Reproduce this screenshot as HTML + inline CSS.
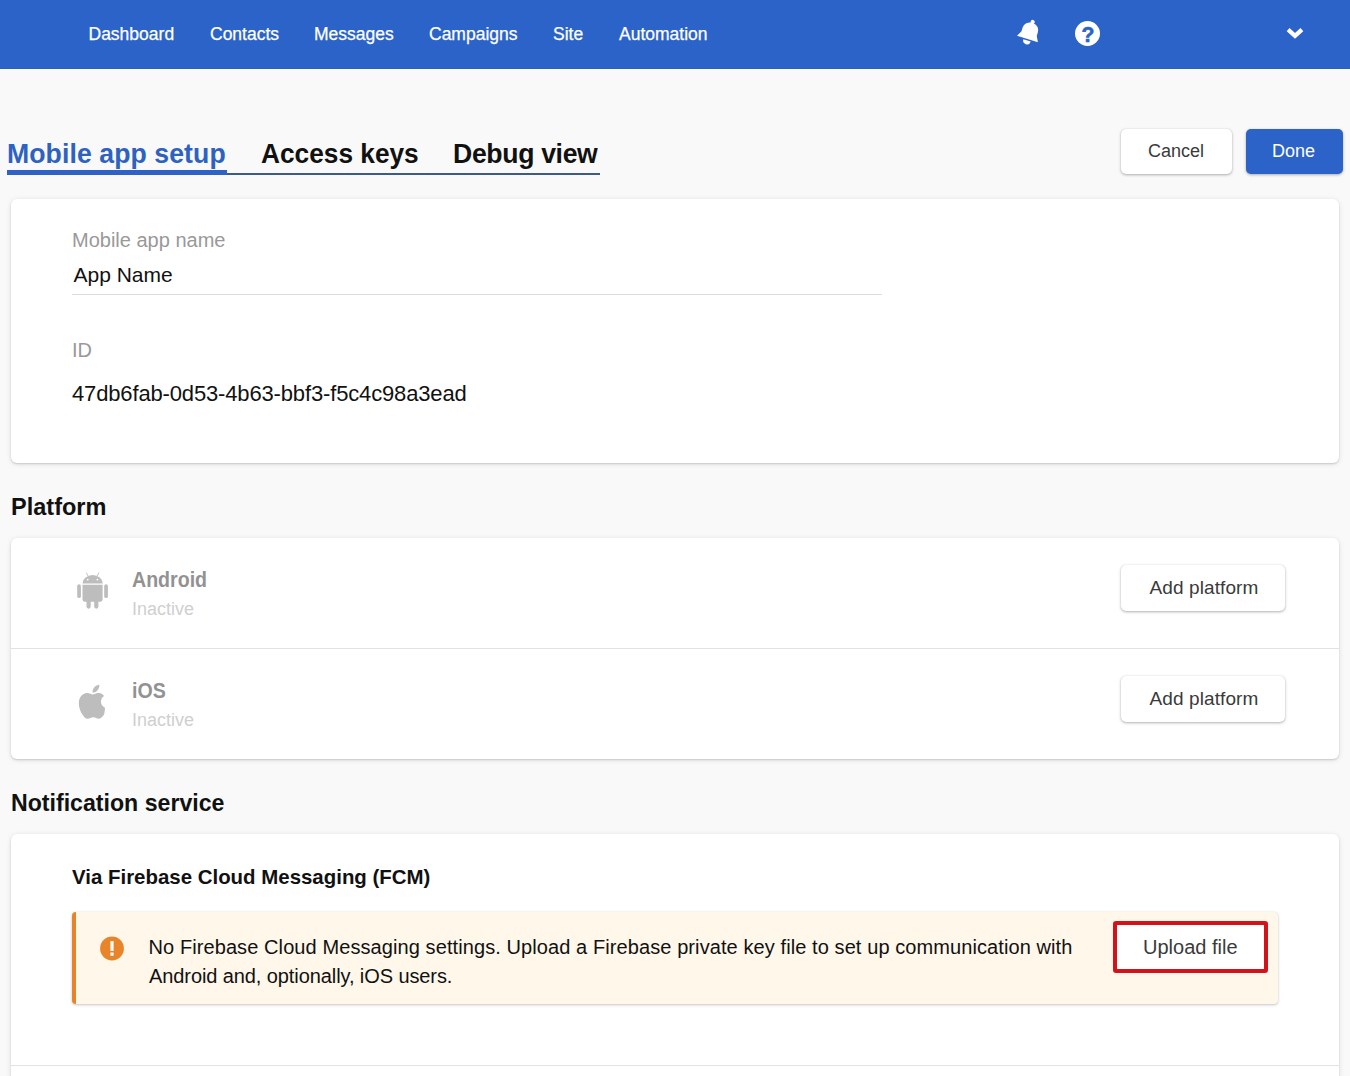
<!DOCTYPE html>
<html>
<head>
<meta charset="utf-8">
<style>
html, body { margin:0; padding:0; }
body { width:1350px; height:1076px; overflow:hidden; position:relative; background:#f9f9f9; font-family:"Liberation Sans", sans-serif; }
.a { position:absolute; white-space:nowrap; line-height:1; transform-origin:0 0; }
#nav { position:absolute; left:0; top:0; width:1350px; height:68px; background:#2b63c9; border-bottom:1px solid #3361a8; }
#navedge { position:absolute; left:0; top:69px; width:1350px; height:1px; background:#f0fcfd; }
.nv { position:absolute; top:25.5px; font-size:17.5px; color:#fff; -webkit-text-stroke:0.25px #fff; line-height:1; white-space:nowrap; }
.tab { font-size:28px; font-weight:700; color:#111; }
.card { position:absolute; left:11px; width:1328px; background:#fff; border-radius:6px; box-shadow:0 1px 2px rgba(0,0,0,0.16), 0 1px 6px rgba(0,0,0,0.09); }
.btn { position:absolute; background:#fff; border-radius:5px; box-shadow:0 1px 3px rgba(0,0,0,0.3), 0 0 1px rgba(0,0,0,0.15); }
.btxt { font-size:18px; color:#3a3a3a; }
.lbl { font-size:20px; color:#999; }
.val { color:#111; }
.sect { font-size:24px; font-weight:700; color:#111; }
.pname { font-size:22px; font-weight:700; color:#929292; }
.inact { font-size:18px; color:#cfcfcf; }
.div { position:absolute; height:1px; background:#e2e2e2; }
</style>
</head>
<body>
<div id="nav">
  <span class="nv" style="left:88.5px">Dashboard</span>
  <span class="nv" style="left:210px">Contacts</span>
  <span class="nv" style="left:314px">Messages</span>
  <span class="nv" style="left:429px">Campaigns</span>
  <span class="nv" style="left:553px">Site</span>
  <span class="nv" style="left:619px">Automation</span>
</div>

<div id="navedge"></div>
<!-- tabs -->
<div class="a" style="left:7px;top:173px;width:593px;height:2px;background:#3d5c85"></div>
<div class="a" style="left:7px;top:170px;width:220px;height:5px;background:#2e62c4"></div>
<span class="a tab" style="left:7px;top:140px;color:#2e62c0;letter-spacing:0.1px;transform:scaleX(0.95)">Mobile app setup</span>
<span class="a tab" style="left:261px;top:140px;transform:scaleX(0.938)">Access keys</span>
<span class="a tab" style="left:453px;top:140px;letter-spacing:-0.35px;transform:scaleX(0.95)">Debug view</span>

<!-- buttons -->
<div class="btn" style="left:1121px;top:129px;width:111px;height:45px"></div>
<span class="a btxt" style="left:1148px;top:142px">Cancel</span>
<div class="btn" style="left:1246px;top:129px;width:97px;height:45px;background:#2b63c9"></div>
<span class="a btxt" style="left:1272px;top:142px;color:#fff">Done</span>

<!-- card 1 -->
<div class="card" style="top:199px;height:264px"></div>
<span class="a lbl" style="left:72px;top:230px">Mobile app name</span>
<span class="a val" style="left:73.5px;top:263.5px;font-size:21px">App Name</span>
<div class="div" style="left:72px;top:294px;width:810px;background:#dcdcdc"></div>
<span class="a lbl" style="left:72px;top:340px">ID</span>
<span class="a val" style="left:72px;top:383px;font-size:22px;letter-spacing:-0.15px">47db6fab-0d53-4b63-bbf3-f5c4c98a3ead</span>

<!-- platform -->
<span class="a sect" style="left:11px;top:495px;transform:scaleX(0.98)">Platform</span>
<div class="card" style="top:538px;height:221px"></div>
<div class="div" style="left:11px;top:648px;width:1328px"></div>
<span class="a pname" style="left:132px;top:569px;transform:scaleX(0.89)">Android</span>
<span class="a inact" style="left:132px;top:600px">Inactive</span>
<span class="a pname" style="left:132px;top:680px;transform:scaleX(0.89)">iOS</span>
<span class="a inact" style="left:132px;top:711px">Inactive</span>
<div class="btn" style="left:1121px;top:565px;width:164px;height:46px"></div>
<span class="a btxt" style="left:1149.5px;top:578px;font-size:19px;letter-spacing:0.1px">Add platform</span>
<div class="btn" style="left:1121px;top:676px;width:164px;height:46px"></div>
<span class="a btxt" style="left:1149.5px;top:689px;font-size:19px;letter-spacing:0.1px">Add platform</span>

<!-- notification -->
<span class="a sect" style="left:11px;top:791px;transform:scaleX(0.964)">Notification service</span>
<div class="card" style="top:834px;height:300px"></div>
<span class="a" style="left:72px;top:866px;font-size:21px;font-weight:700;color:#111;transform:scaleX(0.973)">Via Firebase Cloud Messaging (FCM)</span>
<div class="a" style="left:72px;top:912px;width:1206px;height:92px;background:#fef7ea;border-radius:4px;box-shadow:0 1px 3px rgba(0,0,0,0.22), 0 0 1px rgba(0,0,0,0.12)"></div>
<div class="a" style="left:72px;top:912px;width:4px;height:92px;background:#e8832a;border-radius:4px 0 0 4px"></div>
<span class="a val" style="left:148.5px;top:937px;font-size:20px;letter-spacing:0.09px">No Firebase Cloud Messaging settings. Upload a Firebase private key file to set up communication with</span>
<span class="a val" style="left:149px;top:966px;font-size:20px;letter-spacing:-0.09px">Android and, optionally, iOS users.</span>
<div class="a" style="left:1113px;top:921px;width:147px;height:44px;border:4px solid #d3121a;border-radius:3px;background:#fff"></div>
<span class="a btxt" style="left:1143px;top:937px;font-size:20px">Upload file</span>
<div class="div" style="left:11px;top:1065px;width:1328px"></div>

<!-- nav icons -->
<svg class="a" style="left:1010px;top:14.5px" width="38" height="38" viewBox="0 0 38 38">
  <g transform="rotate(17 19 19) translate(19 19) scale(1.05) translate(-19 -19)" fill="#fff">
    <circle cx="19" cy="7" r="2"/>
    <path d="M19 8 C14 8 11.4 11.2 11.4 15.2 L11.4 18.6 L8.6 24 L29.4 24 L26.6 18.6 L26.6 15.2 C26.6 11.2 24 8 19 8 Z"/>
    <path d="M15.3 25.4 A3.7 3.7 0 0 0 22.7 25.4 Z"/>
  </g>
</svg>
<svg class="a" style="left:1075px;top:21px" width="25" height="25" viewBox="0 0 25 25">
  <circle cx="12.5" cy="12.5" r="12.5" fill="#fff"/>
</svg>
<span class="a" style="left:1080.6px;top:22.7px;font-size:22.8px;font-weight:700;color:#2b63c9;-webkit-text-stroke:0.6px #2b63c9;transform:scaleX(0.93);transform-origin:6px 0">?</span>
<svg class="a" style="left:1284px;top:24px" width="22" height="18" viewBox="0 0 22 18">
  <path d="M4.1 5.6 L11 11.9 L17.9 5.6" fill="none" stroke="#fff" stroke-width="4.2"/>
</svg>

<!-- android -->
<svg class="a" style="left:70px;top:565px" width="45" height="50" viewBox="70 565 45 50">
  <g fill="#bdbdbd">
    <path d="M82.5 583.6 A10.15 8.6 0 0 1 102.8 583.6 Z"/>
    <line x1="86.3" y1="572.6" x2="88" y2="576" stroke="#bdbdbd" stroke-width="0.9"/>
    <line x1="98.9" y1="572.6" x2="97.2" y2="576" stroke="#bdbdbd" stroke-width="0.9"/>
    <path d="M82.5 584.8 H102.6 V599.6 A2.1 2.1 0 0 1 100.5 601.7 H84.6 A2.1 2.1 0 0 1 82.5 599.6 Z"/>
    <rect x="77.2" y="584.3" width="3.7" height="13.7" rx="1.85"/>
    <rect x="104.2" y="584.3" width="3.7" height="13.7" rx="1.85"/>
    <rect x="86.5" y="596" width="4.2" height="12.7" rx="2.1"/>
    <rect x="94.2" y="596" width="4.2" height="12.7" rx="2.1"/>
  </g>
  <circle cx="87.7" cy="579.6" r="0.9" fill="#fff"/>
  <circle cx="97.4" cy="579.6" r="0.9" fill="#fff"/>
</svg>
<!-- apple -->
<svg class="a" style="left:70px;top:680px" width="45" height="45" viewBox="0 0 24 24">
  <path fill="#bdbdbd" transform="translate(11.6 11.6) scale(0.905) translate(-11.47 -12)" d="M18.71,19.5C17.88,20.74 17,21.95 15.66,21.97C14.32,22 13.89,21.18 12.37,21.18C10.84,21.18 10.37,21.95 9.1,22C7.79,22.05 6.8,20.68 5.96,19.47C4.25,17 2.94,12.45 4.7,9.39C5.57,7.87 7.13,6.91 8.82,6.88C10.1,6.86 11.32,7.75 12.11,7.75C12.89,7.75 14.21,6.68 15.56,6.82C16.13,6.85 17.73,7.05 18.76,8.57C18.68,8.62 16.85,9.69 16.87,11.91C16.9,14.56 19.21,15.45 19.24,15.46C19.3,16.4 19.1,18.3 18.71,19.5M13,3.5C13.73,2.67 14.94,2.04 15.94,2C16.07,3.17 15.6,4.35 14.9,5.19C14.21,6.04 13.07,6.7 11.95,6.61C11.8,5.46 12.36,4.26 13,3.5Z"/>
</svg>
<!-- alert icon -->
<svg class="a" style="left:99px;top:936px" width="26" height="26" viewBox="0 0 26 26">
  <circle cx="13" cy="12.5" r="11.9" fill="#e8852b"/>
  <rect x="11.4" y="5.1" width="3.2" height="9.9" fill="#fff"/>
  <rect x="11.4" y="16.5" width="3.2" height="3.2" fill="#fff"/>
</svg>
</body>
</html>
